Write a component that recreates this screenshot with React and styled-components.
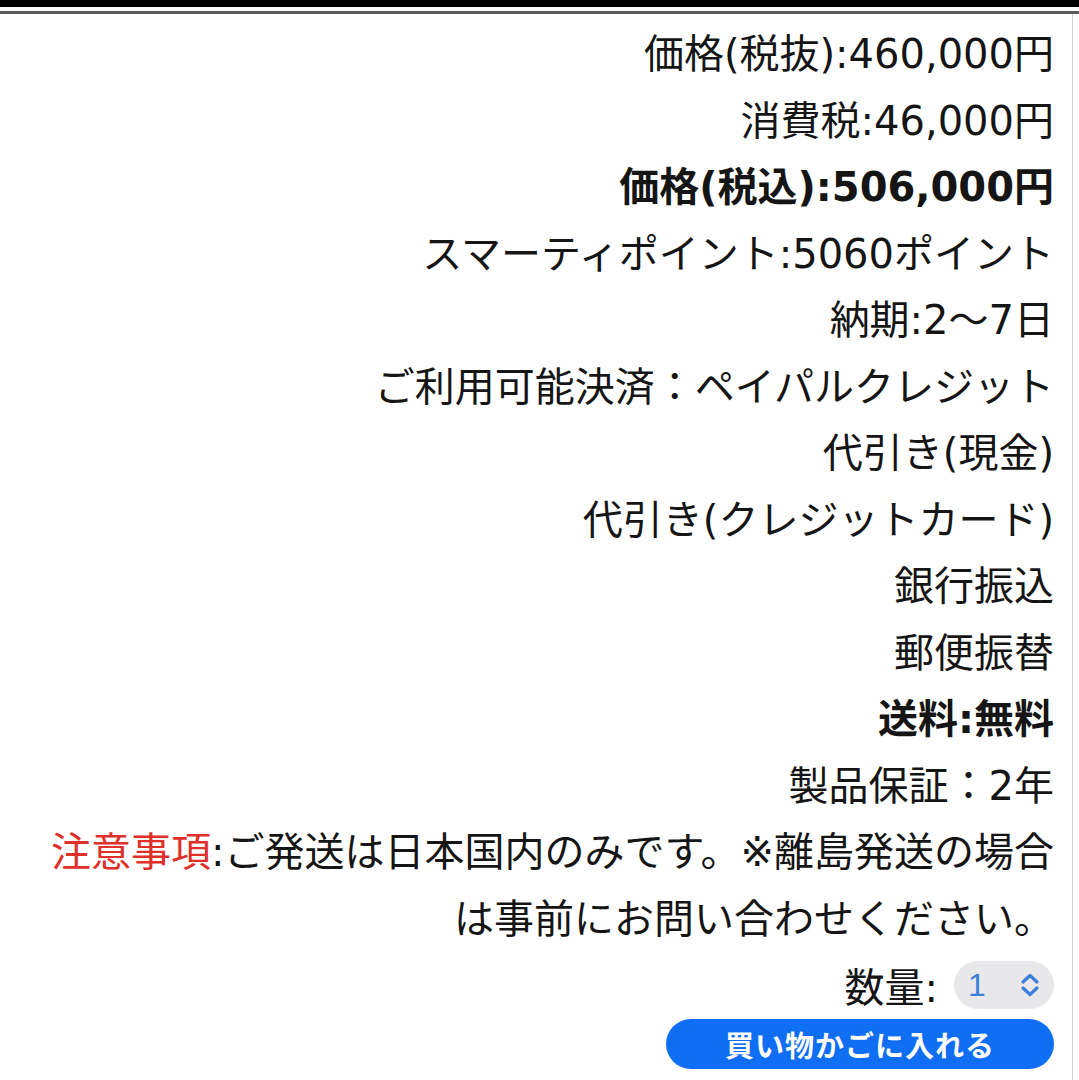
import React from "react";
import styled, { createGlobalStyle } from "styled-components";

const Global = createGlobalStyle`
  body {
    margin: 0;
    background: #fff;
    font-family: "DejaVu Sans", "Noto Sans CJK JP", sans-serif;
    color: #151515;
  }
`;

const Page = styled.div`
  width: 1079px;
  height: 1080px;
  overflow: hidden;
  background: #fff;
`;

const TopBar = styled.div`
  height: 7px;
  background: #000;
`;

const TopRule = styled.div`
  height: 3px;
  margin-top: 4px;
  background: #5a5a5a;
`;

const Panel = styled.div`
  width: 1073px;
  border-right: 1px solid #cfcfcf;
  padding: 7px 18px 0 0;
  box-sizing: border-box;
  height: 1066px;
  display: flex;
  flex-direction: column;
  align-items: flex-end;
`;

const Line = styled.div`
  font-size: 40px;
  line-height: 66.5px;
  text-align: right;
  font-weight: ${(p) => (p.$bold ? 700 : 400)};
  white-space: nowrap;
`;

const Notice = styled.div`
  font-size: 40px;
  line-height: 66.5px;
  text-align: right;
  width: 1020px;
`;

const Red = styled.span`
  color: #e0302a;
`;

const QtyRow = styled.div`
  display: flex;
  align-items: center;
  gap: 16px;
  height: 66px;
  font-size: 40px;
`;

const Select = styled.div`
  width: 100px;
  height: 48px;
  border-radius: 24px;
  background: #e8e8ea;
  display: flex;
  align-items: center;
  justify-content: space-between;
  padding: 0 13px 0 14px;
  box-sizing: border-box;
  color: #3b7fd9;
  font-family: "Liberation Sans", sans-serif;
  font-size: 32px;
`;

const CartButton = styled.button`
  width: 388px;
  height: 50px;
  margin-top: 1px;
  border: none;
  border-radius: 25px;
  background: #0f6ef3;
  color: #fff;
  font-family: "Noto Sans CJK JP", sans-serif;
  font-weight: 700;
  font-size: 29px;
  display: flex;
  align-items: center;
  justify-content: center;
  letter-spacing: 1px;
`;

const Chevrons = () => (
  <svg width="22" height="26" viewBox="0 0 22 26" fill="none">
    <path d="M4 10 L11 3.5 L18 10" stroke="#3b7fd9" strokeWidth="3.2" strokeLinecap="round" strokeLinejoin="round" />
    <path d="M4 16 L11 22.5 L18 16" stroke="#3b7fd9" strokeWidth="3.2" strokeLinecap="round" strokeLinejoin="round" />
  </svg>
);

const lines = [
  { t: "価格(税抜):460,000円" },
  { t: "消費税:46,000円" },
  { t: "価格(税込):506,000円", bold: true },
  { t: "スマーティポイント:5060ポイント" },
  { t: "納期:2〜7日" },
  { t: "ご利用可能決済：ペイパルクレジット" },
  { t: "代引き(現金)" },
  { t: "代引き(クレジットカード)" },
  { t: "銀行振込" },
  { t: "郵便振替" },
  { t: "送料:無料", bold: true },
  { t: "製品保証：2年" },
];

export default function App() {
  return (
    <Page>
      <Global />
      <TopBar />
      <TopRule />
      <Panel>
        {lines.map((l) => (
          <Line key={l.t} $bold={l.bold}>
            {l.t}
          </Line>
        ))}
        <Notice>
          <Red>注意事項</Red>:ご発送は日本国内のみです。※離島発送の場合は事前にお問い合わせください。
        </Notice>
        <QtyRow>
          <span>数量:</span>
          <Select>
            <span>1</span>
            <Chevrons />
          </Select>
        </QtyRow>
        <CartButton>買い物かごに入れる</CartButton>
      </Panel>
    </Page>
  );
}
